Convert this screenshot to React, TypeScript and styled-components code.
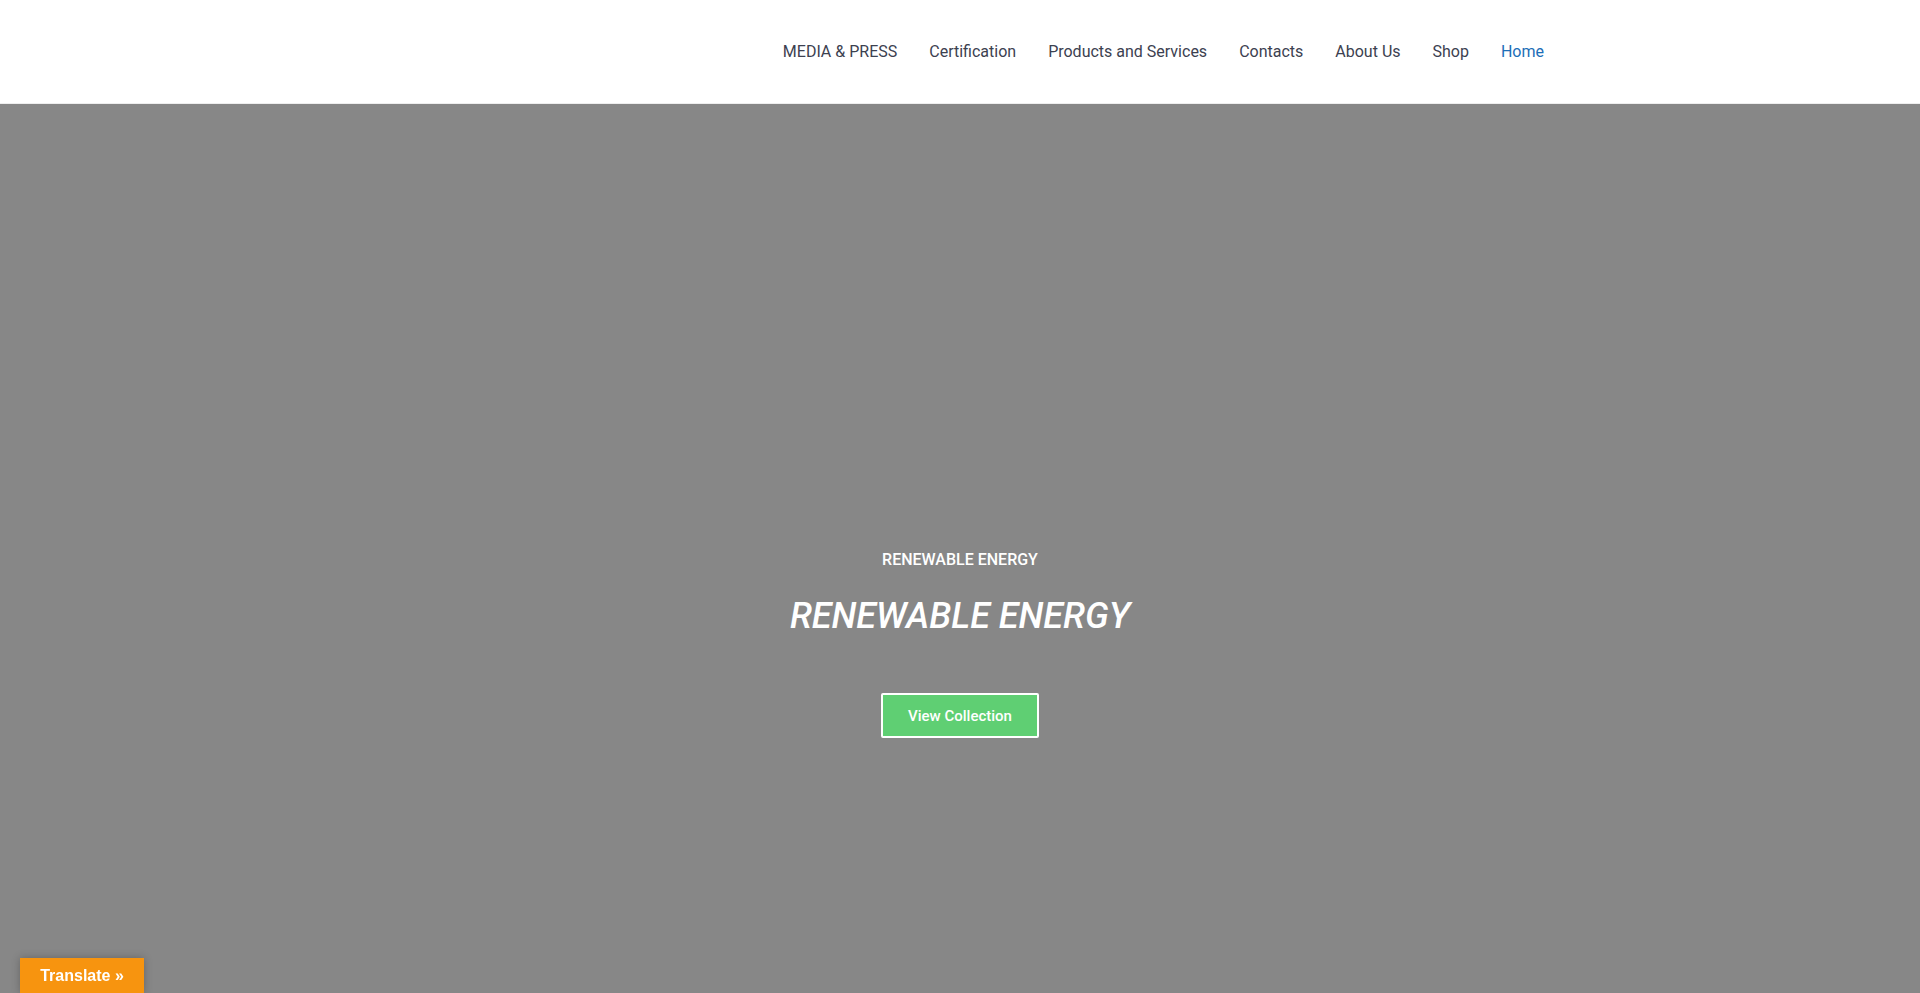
import React from "react";
import styled, { createGlobalStyle } from "styled-components";

const Global = createGlobalStyle`
  html, body { margin: 0; padding: 0; height: 100%; }
  body { font-family: Roboto, "Noto Sans", sans-serif; background: #878787; overflow: hidden; }
  #root { height: 100%; }
`;

const Page = styled.div`
  display: flex;
  flex-direction: column;
  height: 993px;
`;

const Header = styled.header`
  height: 103px;
  background: #ffffff;
  border-bottom: 1px solid #eeeeee;
  display: flex;
  align-items: center;
  justify-content: flex-end;
  padding-right: 376px;
  flex-shrink: 0;
`;

const Nav = styled.nav`
  display: flex;
  align-items: center;
  gap: 32px;
`;

const NavLink = styled.a<{ $active?: boolean }>`
  font-family: Roboto, sans-serif;
  font-size: 16px;
  font-weight: 400;
  color: ${(p) => (p.$active ? "#1c6eb7" : "#3c4150")};
  text-decoration: none;
  line-height: 24px;
  cursor: pointer;
`;

const Hero = styled.section`
  flex: 1;
  background: #878787;
  display: flex;
  flex-direction: column;
  align-items: center;
  padding-top: 446px;
`;

const Kicker = styled.div`
  font-family: Roboto, sans-serif;
  font-size: 16px;
  font-weight: 500;
  color: #ffffff;
  line-height: 20px;
`;

const Title = styled.h1`
  margin: 24px 0 0;
  font-family: Roboto, sans-serif;
  font-style: italic;
  font-weight: 500;
  font-size: 36px;
  line-height: 44px;
  color: #ffffff;
`;

const Button = styled.button`
  margin-top: 55px;
  width: 158px;
  height: 45px;
  background: #5fcf73;
  border: 2px solid #ffffff;
  border-radius: 2px;
  color: #ffffff;
  font-family: Roboto, sans-serif;
  font-weight: 500;
  font-size: 15px;
  cursor: pointer;
`;

const Translate = styled.div`
  position: fixed;
  left: 20px;
  bottom: 0;
  width: 124px;
  height: 35px;
  background: #f7940f;
  color: #ffffff;
  font-family: "Liberation Sans", Arial, sans-serif;
  font-weight: 700;
  font-size: 16px;
  display: flex;
  align-items: center;
  justify-content: center;
  box-shadow: 0 0 8px rgba(0, 0, 0, 0.25);
`;

const links = ["MEDIA & PRESS", "Certification", "Products and Services", "Contacts", "About Us", "Shop", "Home"];

export default function App() {
  return (
    <>
      <Global />
      <Page>
        <Header>
          <Nav>
            {links.map((l) => (
              <NavLink key={l} $active={l === "Home"}>
                {l}
              </NavLink>
            ))}
          </Nav>
        </Header>
        <Hero>
          <Kicker>RENEWABLE ENERGY</Kicker>
          <Title>RENEWABLE ENERGY</Title>
          <Button>View Collection</Button>
        </Hero>
      </Page>
      <Translate>Translate »</Translate>
    </>
  );
}
